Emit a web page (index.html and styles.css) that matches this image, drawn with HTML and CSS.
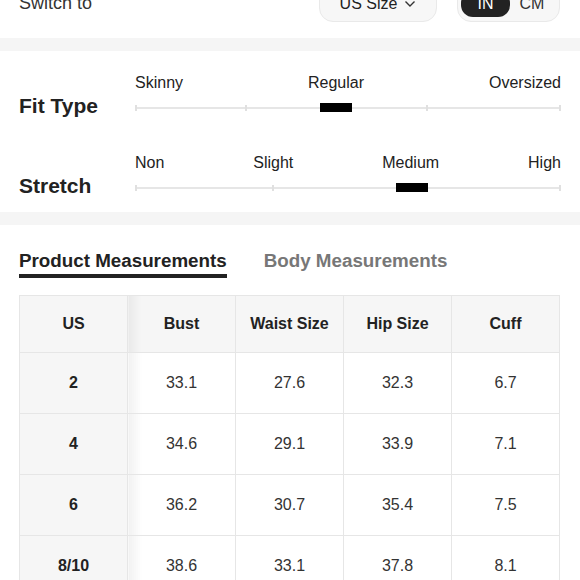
FILE: index.html
```html
<!DOCTYPE html>
<html>
<head>
<meta charset="utf-8">
<link rel="stylesheet" href="styles.css">
</head>
<body>
<div class="top">
  <span class="switch-label">Switch to</span>
  <button class="size-btn">US Size
    <svg class="chev" width="12" height="8" viewBox="0 0 12 8"><path d="M1.5 1.5 L6 6 L10.5 1.5" fill="none" stroke="#333" stroke-width="1.4"/></svg>
  </button>
  <div class="unit-toggle">
    <span class="unit active">IN</span>
    <span class="unit">CM</span>
  </div>
</div>
<div class="band"></div>

<section class="fit">
  <div class="attr">
    <div class="attr-name">Fit Type</div>
    <div class="scale">
      <div class="scale-labels"><span>Skinny</span><span>Regular</span><span>Oversized</span></div>
      <div class="track-area">
        <div class="track"></div>
        <span class="tick" style="left:0%"></span>
        <span class="tick" style="left:25.8%"></span>
        <span class="tick" style="left:68.3%"></span>
        <span class="tick" style="left:calc(100% - 2px)"></span>
        <span class="marker" style="left:43.4%"></span>
      </div>
    </div>
  </div>
  <div class="attr">
    <div class="attr-name">Stretch</div>
    <div class="scale">
      <div class="scale-labels"><span>Non</span><span>Slight</span><span>Medium</span><span>High</span></div>
      <div class="track-area">
        <div class="track"></div>
        <span class="tick" style="left:0%"></span>
        <span class="tick" style="left:32.2%"></span>
        <span class="tick" style="left:64.5%"></span>
        <span class="tick" style="left:calc(100% - 2px)"></span>
        <span class="marker" style="left:61.2%"></span>
      </div>
    </div>
  </div>
</section>
<div class="band"></div>

<section class="measure">
  <div class="tabs">
    <span class="tab active">Product Measurements</span>
    <span class="tab">Body Measurements</span>
  </div>
  <table class="size-table">
    <thead>
      <tr><th>US</th><th>Bust</th><th>Waist Size</th><th>Hip Size</th><th>Cuff</th></tr>
    </thead>
    <tbody>
      <tr><th>2</th><td>33.1</td><td>27.6</td><td>32.3</td><td>6.7</td></tr>
      <tr><th>4</th><td>34.6</td><td>29.1</td><td>33.9</td><td>7.1</td></tr>
      <tr><th>6</th><td>36.2</td><td>30.7</td><td>35.4</td><td>7.5</td></tr>
      <tr><th>8/10</th><td>38.6</td><td>33.1</td><td>37.8</td><td>8.1</td></tr>
    </tbody>
  </table>
</section>
</body>
</html>
```
FILE: styles.css
```css
html, body {
  margin: 0;
  padding: 0;
  background: #fff;
  font-family: "Liberation Sans", Arial, Helvetica, sans-serif;
  color: #222;
  overflow: hidden;
}

.top {
  margin-top: -30px;
  height: 68px;
  display: flex;
  align-items: center;
  padding: 0 20px 0 19px;
}

.switch-label {
  font-size: 18px;
  color: #333;
  margin-top: -2px;
}

.size-btn {
  margin-left: auto;
  width: 118px;
  height: 36px;
  border: 1px solid #e9e9e9;
  border-radius: 14px;
  background: #f7f7f7;
  font-family: inherit;
  font-size: 16px;
  color: #222;
  display: flex;
  align-items: center;
  justify-content: center;
  gap: 7px;
  padding: 0;
}

.chev { display: block; }

.unit-toggle {
  margin-left: 20px;
  width: 103px;
  height: 36px;
  box-sizing: border-box;
  border: 1px solid #e9e9e9;
  border-radius: 14px;
  background: #f7f7f7;
  display: flex;
  align-items: center;
  padding: 4px 3px;
}

.unit {
  height: 26px;
  display: flex;
  align-items: center;
  justify-content: center;
  font-size: 16px;
  color: #333;
  width: 44px;
}

.unit.active {
  width: 49px;
  background: #222;
  color: #fff;
  border-radius: 12px;
}

.band {
  height: 13px;
  background: #f5f5f5;
}

.fit {
  padding: 23px 19px 19px 19px;
  display: flex;
  flex-direction: column;
  gap: 41px;
}

.attr {
  display: flex;
  align-items: flex-end;
}

.attr-name {
  width: 116px;
  flex-shrink: 0;
  font-size: 21px;
  font-weight: bold;
  line-height: 24px;
  color: #222;
  margin-bottom: -5px;
}

.scale {
  flex: 1;
  display: flex;
  flex-direction: column;
  gap: 11px;
}

.scale-labels {
  display: flex;
  justify-content: space-between;
  font-size: 16px;
  line-height: 18px;
  color: #222;
}

.track-area {
  position: relative;
  height: 10px;
}

.track {
  position: absolute;
  left: 0;
  right: 0;
  top: 4px;
  height: 2px;
  background: #e6e6e6;
}

.tick {
  position: absolute;
  top: 2px;
  width: 2px;
  height: 6px;
  background: #e0e0e0;
}

.marker {
  position: absolute;
  top: 0;
  width: 32px;
  height: 9px;
  background: #000;
}

.measure {
  padding: 25px 20px 0 19px;
}

.tabs {
  display: flex;
  gap: 37px;
  align-items: flex-start;
}

.tab {
  font-size: 18.8px;
  font-weight: bold;
  line-height: 22px;
  color: #777;
  padding-bottom: 2px;
  border-bottom: 4px solid transparent;
}

.tab.active {
  color: #222;
  border-bottom-color: #222;
}

.size-table {
  margin-top: 17px;
  width: 541px;
  border-collapse: collapse;
  table-layout: fixed;
  font-size: 16px;
}

.size-table th,
.size-table td {
  border: 1px solid #e6e6e6;
  text-align: center;
  padding: 0;
}

.size-table thead th {
  height: 56px;
  background: #f6f6f6;
  font-weight: bold;
  color: #222;
}

.size-table tbody th {
  height: 60px;
  background: #f6f6f6;
  font-weight: bold;
  color: #222;
}

.size-table td {
  height: 60px;
  color: #333;
  background: #fff;
}

.size-table tr > :nth-child(2) {
  background-image: linear-gradient(to right, rgba(0, 0, 0, 0.05), rgba(0, 0, 0, 0) 14px);
}
```
